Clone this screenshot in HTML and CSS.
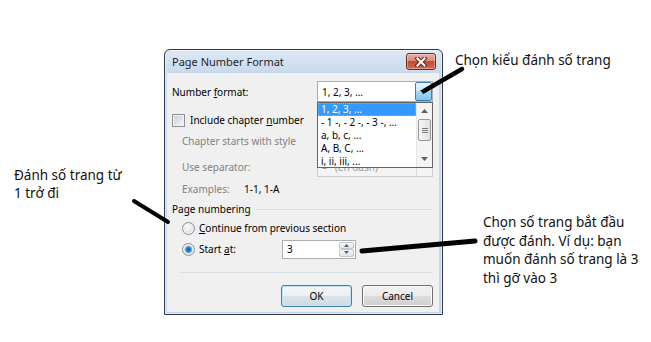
FILE: index.html
```html
<!DOCTYPE html>
<html lang="vi">
<head>
    <meta charset="UTF-8">
    <meta name="viewport" content="width=device-width, initial-scale=1.0">
    <title>Page Number Format</title>
    <link rel="stylesheet" href="styles.css">
</head>
<body>
    <div class="canvas">
        <div class="dialog">
            <div class="titlebar">
                <span class="title">Page Number Format</span>
                <span class="close-btn">
                    <svg width="14" height="10" viewBox="0 0 14 10">
                        <path d="M3.5 1.5 L10.5 8.5 M10.5 1.5 L3.5 8.5" stroke="#5a2418" stroke-width="4.2" stroke-linecap="square"/>
                        <path d="M3.5 1.5 L10.5 8.5 M10.5 1.5 L3.5 8.5" stroke="#fff" stroke-width="2.2" stroke-linecap="square"/>
                    </svg>
                </span>
            </div>

            <div class="client">
                <div class="row row-format">
                    <span>Number <u>f</u>ormat:</span>
                    <div class="combo">
                        <span class="combo-text">1, 2, 3, ...</span>
                        <span class="combo-btn">
                            <svg width="7" height="4" viewBox="0 0 7 4"><polygon points="0,0 7,0 3.5,4" fill="#000"/></svg>
                        </span>
                        <!-- open dropdown of the format box -->
                        <div class="droplist">
                            <ul class="droplist-items">
                                <li class="selected">1, 2, 3, ...</li>
                                <li>- 1 -, - 2 -, - 3 -, ...</li>
                                <li>a, b, c, ...</li>
                                <li>A, B, C, ...</li>
                                <li>i, ii, iii, ...</li>
                            </ul>
                            <div class="scrollbar">
                                <span class="scroll-arrow">
                                    <svg width="7" height="4" viewBox="0 0 7 4"><polygon points="0,4 7,4 3.5,0" fill="#606060"/></svg>
                                </span>
                                <span class="thumb"><i></i><i></i><i></i></span>
                                <span class="scroll-fill"></span>
                                <span class="scroll-arrow">
                                    <svg width="7" height="4" viewBox="0 0 7 4"><polygon points="0,0 7,0 3.5,4" fill="#606060"/></svg>
                                </span>
                            </div>
                        </div>
                    </div>
                </div>

                <div class="row row-check">
                    <span class="checkbox"></span>
                    <span>Include chapter <u>n</u>umber</span>
                </div>

                <div class="row row-indent row-chapter muted">Chapter starts with style</div>

                <div class="row row-indent row-sep">
                    <span class="muted">Use separator:</span>
                    <div class="combo combo-disabled">
                        <span class="combo-text">–   (en dash)</span>
                        <span class="combo-side"></span>
                    </div>
                </div>

                <div class="row row-indent row-examples">
                    <span class="muted examples-label">Examples:</span>
                    <span>1-1, 1-A</span>
                </div>

                <div class="row group-head">
                    <span>Page numbering</span>
                    <span class="group-line"></span>
                </div>

                <div class="row row-indent row-radio">
                    <span class="radio"></span>
                    <span><u>C</u>ontinue from previous section</span>
                </div>

                <div class="row row-indent row-radio row-start">
                    <span class="radio radio-checked"></span>
                    <span class="start-label">Start <u>a</u>t:</span>
                    <div class="spin">
                        <span class="spin-value">3</span>
                        <span class="spin-btns">
                            <span class="spin-btn"><svg width="5" height="3" viewBox="0 0 5 3"><polygon points="0,3 5,3 2.5,0" fill="#4d6185"/></svg></span>
                            <span class="spin-btn"><svg width="5" height="3" viewBox="0 0 5 3"><polygon points="0,0 5,0 2.5,3" fill="#4d6185"/></svg></span>
                        </span>
                    </div>
                </div>

                <div class="divider"></div>

                <div class="buttons">
                    <button class="btn btn-default">OK</button>
                    <button class="btn">Cancel</button>
                </div>
            </div>
        </div>

        <p class="note note-format">Chọn kiểu đánh số trang</p>
        <p class="note note-start">Đánh số trang từ<br>1 trở đi</p>
        <p class="note note-begin">Chọn số trang bắt đầu<br>được đánh. Ví dụ: bạn<br>muốn đánh số trang là 3<br>thì gỡ vào 3</p>

        <!-- pointer strokes drawn over the screenshot -->
        <svg class="pointers" width="651" height="342" viewBox="0 0 651 342">
            <line x1="462" y1="69" x2="424" y2="91" stroke-width="4.5"/>
            <line x1="134" y1="201" x2="168" y2="222" stroke-width="4"/>
            <line x1="362" y1="251" x2="475" y2="241" stroke-width="5"/>
        </svg>
    </div>
</body>
</html>
```

FILE: styles.css
```css
* {
    box-sizing: border-box;
}

body {
    margin: 0;
    background: #fff;
    font-family: "Noto Sans", "DejaVu Sans", sans-serif;
}

.canvas {
    position: relative;
    width: 651px;
    height: 342px;
    padding: 49px 0 0 164px;
    overflow: hidden;
}

/* window frame */
.dialog {
    width: 279px;
    height: 266px;
    display: flex;
    flex-direction: column;
    padding: 0 3px 2px 2px;
    border: 1px solid #2e3846;
    border-radius: 6px 6px 0 0;
    background: linear-gradient(#dde8f5, #c9d9ec 23px, #c4d5e9);
    box-shadow: inset 0 0 0 1px rgba(255, 255, 255, 0.5);
}

.titlebar {
    height: 23px;
    display: flex;
    align-items: center;
    justify-content: space-between;
    padding: 0 3px 0 5px;
}

.title {
    font-size: 11px;
    color: #1e1e1e;
}

.close-btn {
    width: 30px;
    height: 17px;
    display: flex;
    align-items: center;
    justify-content: center;
    border: 1px solid #6b2a22;
    border-radius: 3px;
    background: linear-gradient(#eab0a2, #d98b78 45%, #c64a32 50%, #d36a4e);
    box-shadow: inset 0 0 0 1px rgba(255, 255, 255, 0.35);
}

.client {
    flex: 1;
    display: flex;
    flex-direction: column;
    padding: 8px 6px 0 5px;
    background: #f0f0f0;
    font-size: 10px;
    color: #000;
}

u {
    text-underline-offset: 1px;
}

.muted {
    color: #808080;
}

.row {
    display: flex;
    align-items: center;
    white-space: nowrap;
}

.row-indent {
    padding-left: 10px;
}

.row-format {
    height: 21px;
    justify-content: space-between;
}

.row-check {
    height: 20px;
    margin-top: 8px;
    gap: 5px;
}

.row-chapter {
    height: 20px;
    margin-top: 1px;
}

.row-sep {
    height: 20px;
    margin-top: 6px;
    justify-content: space-between;
}

.row-examples {
    height: 20px;
    margin-top: 2px;
}

.examples-label {
    width: 62px;
}

.group-head {
    height: 18px;
    margin-top: 1px;
    gap: 5px;
}

.group-line {
    flex: 1;
    height: 1px;
    background: #d5dfe5;
}

.row-radio {
    height: 18px;
    margin-top: 1px;
    gap: 4px;
}

.row-start {
    height: 20px;
    margin-top: 2px;
}

.start-label {
    width: 79px;
}

.divider {
    height: 1px;
    margin: 13px 0 0 8px;
    background: #d5dfe5;
}

.buttons {
    display: flex;
    justify-content: flex-end;
    gap: 10px;
    margin-top: 12px;
}

/* combo boxes */
.combo {
    position: relative;
    width: 116px;
    height: 21px;
    display: flex;
    align-items: center;
    border: 1px solid #abadb3;
    background: #fff;
}

.combo-text {
    flex: 1;
    padding-left: 4px;
    white-space: pre;
}

.combo-btn {
    width: 17px;
    align-self: stretch;
    display: flex;
    align-items: center;
    justify-content: center;
    border: 1px solid #3c7fb1;
    border-radius: 2px;
    background: linear-gradient(#e5f5fd, #c9e9f9 50%, #a3d8f5 50%, #84c6ed);
}

.combo-disabled {
    height: 20px;
    border-color: #c9cdd1;
    background: #f4f4f4;
    color: #9aa0a8;
}

.combo-side {
    width: 16px;
    align-self: stretch;
    border-left: 1px solid #dadada;
}

.droplist {
    position: absolute;
    z-index: 2;
    left: -1px;
    right: -1px;
    top: 20px;
    height: 66px;
    display: flex;
    border: 1px solid #646464;
    background: #fff;
}

.droplist-items {
    flex: 1;
    margin: 0;
    padding: 0;
    list-style: none;
    overflow: hidden;
}

.droplist-items li {
    height: 13px;
    line-height: 13px;
    padding-left: 3px;
    white-space: nowrap;
}

.droplist-items .selected {
    background: #3399ff;
    color: #fff;
    outline: 1px dotted #d9a35a;
    outline-offset: -1px;
}

.scrollbar {
    width: 16px;
    display: flex;
    flex-direction: column;
    align-items: center;
    background: #f4f4f4;
    border-left: 1px solid #e6e6e6;
}

.scroll-arrow {
    height: 16px;
    display: flex;
    align-items: center;
    justify-content: center;
}

.scroll-fill {
    flex: 1;
}

.thumb {
    width: 13px;
    height: 22px;
    display: flex;
    flex-direction: column;
    align-items: center;
    justify-content: center;
    gap: 1px;
    border: 1px solid #979797;
    border-radius: 2px;
    background: linear-gradient(90deg, #f6f6f6, #e0e0e0);
}

.thumb i {
    width: 6px;
    height: 1px;
    background: #7a7a7a;
}

/* check box and radios */
.checkbox {
    width: 13px;
    height: 13px;
    border: 1px solid #8e8f8f;
    background: linear-gradient(135deg, #c9cdd3, #f6f6f6);
    box-shadow: inset 0 0 0 1px #f4f4f4;
}

.radio {
    width: 13px;
    height: 13px;
    border: 1px solid #8e8f8f;
    border-radius: 50%;
    background: radial-gradient(circle at 40% 35%, #fbfbfb, #d0d3d7);
    box-shadow: inset 0 0 0 1px #f2f2f2;
}

.radio-checked {
    background:
        radial-gradient(circle at 50% 50%, #1b59a6 0, #2f76c5 2px, #6fb3ea 3.3px, #bfe0f8 4px, transparent 4.5px),
        radial-gradient(circle at 40% 35%, #fbfbfb, #d0d3d7);
}

/* spin box */
.spin {
    width: 74px;
    height: 19px;
    display: flex;
    border: 1px solid #abadb3;
    background: #fff;
}

.spin-value {
    flex: 1;
    padding-left: 4px;
    line-height: 17px;
}

.spin-btns {
    width: 16px;
    display: flex;
    flex-direction: column;
    padding: 1px 1px 1px 0;
}

.spin-btn {
    flex: 1;
    display: flex;
    align-items: center;
    justify-content: center;
    border: 1px solid #c3c7cc;
    border-radius: 2px;
    background: linear-gradient(#f7f7f7, #e2e4e7);
}

/* push buttons */
.btn {
    width: 71px;
    height: 22px;
    padding: 0;
    border: 1px solid #707070;
    border-radius: 3px;
    background: linear-gradient(#f2f2f2, #ebebeb 50%, #dddddd 50%, #cfcfcf);
    box-shadow: inset 0 0 0 1px #fcfcfc;
    font-family: inherit;
    font-size: 10px;
    color: #000;
}

.btn-default {
    border-color: #3c7fb1;
    background: linear-gradient(#f3f6f9, #ebf0f4 50%, #dbe3ea 50%, #d0dae3);
    box-shadow: inset 0 0 0 1px #c4e5f8;
}

/* annotations */
.note {
    position: absolute;
    margin: 0;
    font-size: 13.5px;
    line-height: 18px;
    color: #111;
    white-space: nowrap;
}

.note-format {
    left: 455px;
    top: 51px;
}

.note-start {
    left: 14px;
    top: 166px;
}

.note-begin {
    left: 483px;
    top: 213px;
    line-height: 18.6px;
}

.pointers {
    position: absolute;
    left: 0;
    top: 0;
    z-index: 3;
    stroke: #000;
    stroke-linecap: round;
    pointer-events: none;
}
```
